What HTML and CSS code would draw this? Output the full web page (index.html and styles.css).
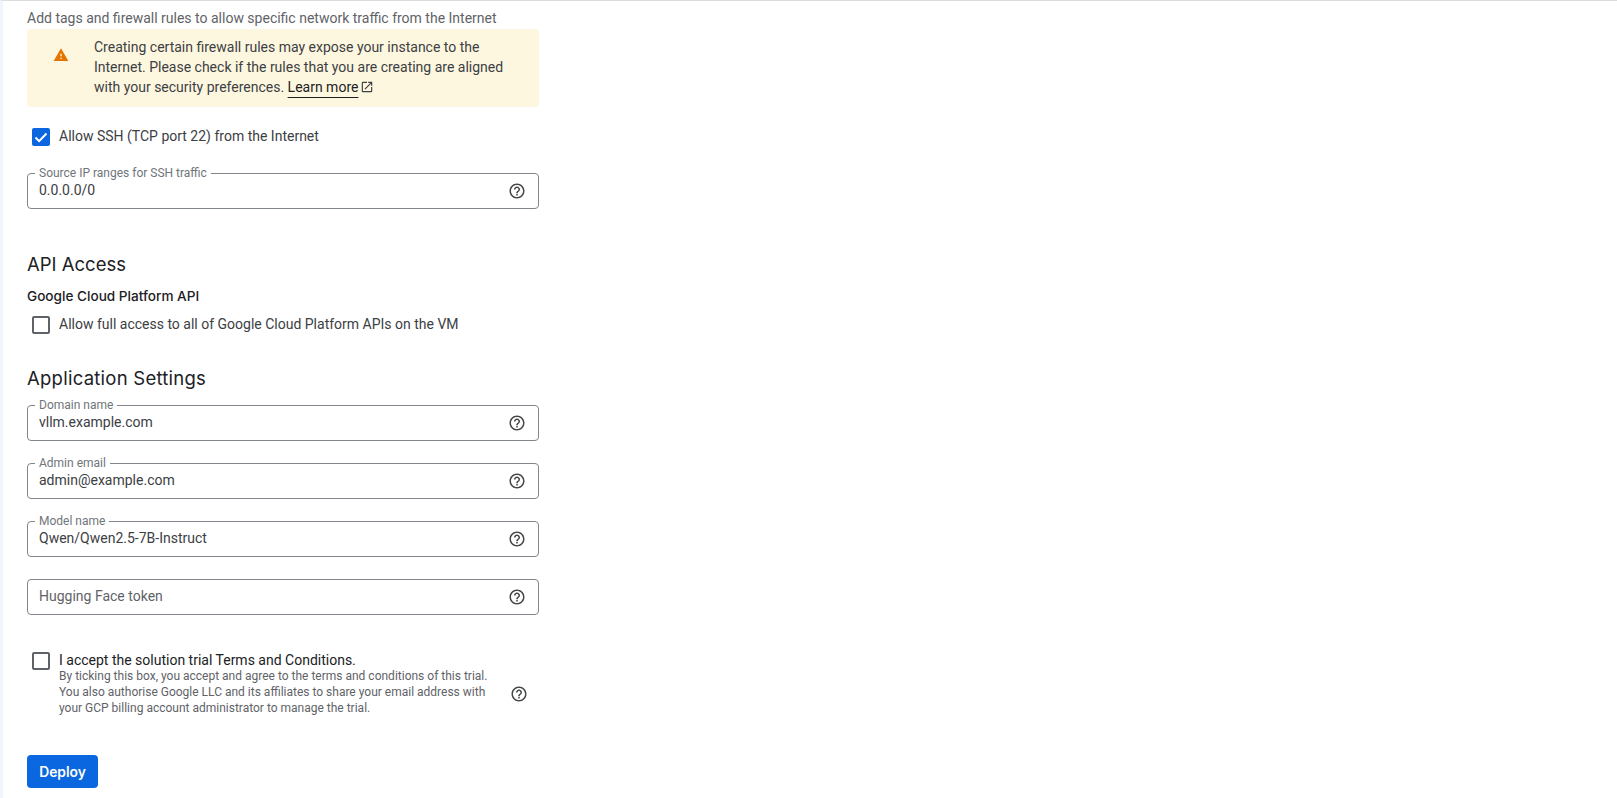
FILE: index.html
```html
<!DOCTYPE html>
<html lang="en">
<head>
<meta charset="utf-8">
<title>Deploy</title>
<link rel="stylesheet" href="styles.css">
</head>
<body>
<div class="page">
  <main class="form">
    <p class="hint">Add tags and firewall rules to allow specific network traffic from the Internet</p>
    <div class="warning">
      <svg class="warn-icon" viewBox="0 0 24 24"><path fill="#e37400" d="M1 21h22L12 2 1 21zm12-3h-2v-2h2v2zm0-4h-2v-4h2v4z"/></svg>
      <p>Creating certain firewall rules may expose your instance to the Internet. Please check if the rules that you are creating are aligned with your security preferences. <a class="learn" href="#">Learn more</a><svg class="ext" viewBox="0 0 24 24"><path fill="#3c4043" d="M19 19H5V5h7V3H5a2 2 0 0 0-2 2v14a2 2 0 0 0 2 2h14a2 2 0 0 0 2-2v-7h-2v7zM14 3v2h3.59l-9.83 9.83 1.41 1.41L19 6.41V10h2V3h-7z"/></svg></p>
    </div>
    <div class="check ssh">
      <span class="box on"><svg viewBox="0 0 18 18"><path fill="none" stroke="#fff" stroke-width="2" d="M3.5 9.5l3.6 3.6 7.4-7.6"/></svg></span>
      <span>Allow SSH (TCP port 22) from the Internet</span>
    </div>
    <div class="field first">
      <span class="legend">Source IP ranges for SSH traffic</span>
      <span class="value">0.0.0.0/0</span>
      <svg class="help" viewBox="0 0 24 24"><use href="#q"/></svg>
    </div>

    <h2 class="api">API Access</h2>
    <h3>Google Cloud Platform API</h3>
    <div class="check full">
      <span class="box"></span>
      <span>Allow full access to all of Google Cloud Platform APIs on the VM</span>
    </div>

    <h2 class="app">Application Settings</h2>
    <div class="fields">
      <div class="field">
        <span class="legend">Domain name</span>
        <span class="value">vllm.example.com</span>
        <svg class="help" viewBox="0 0 24 24"><use href="#q"/></svg>
      </div>
      <div class="field">
        <span class="legend">Admin email</span>
        <span class="value">admin@example.com</span>
        <svg class="help" viewBox="0 0 24 24"><use href="#q"/></svg>
      </div>
      <div class="field">
        <span class="legend">Model name</span>
        <span class="value">Qwen/Qwen2.5-7B-Instruct</span>
        <svg class="help" viewBox="0 0 24 24"><use href="#q"/></svg>
      </div>
      <div class="field plain">
        <span class="value placeholder">Hugging Face token</span>
        <svg class="help" viewBox="0 0 24 24"><use href="#q"/></svg>
      </div>
    </div>

    <div class="terms">
      <span class="box"></span>
      <div class="terms-text">
        <div class="terms-title">I accept the solution trial Terms and Conditions.</div>
        <div class="terms-sub">By ticking this box, you accept and agree to the terms and conditions of this trial. You also authorise Google LLC and its affiliates to share your email address with your GCP billing account administrator to manage the trial.</div>
      </div>
      <svg class="help" viewBox="0 0 24 24"><use href="#q"/></svg>
    </div>

    <button class="deploy" type="button">Deploy</button>
  </main>
</div>
<svg class="defs" width="0" height="0">
  <symbol id="q" viewBox="0 0 24 24"><path fill="#444746" d="M11 18h2v-2h-2v2zm1-16C6.48 2 2 6.48 2 12s4.48 10 10 10 10-4.48 10-10S17.52 2 12 2zm0 18c-4.41 0-8-3.59-8-8s3.59-8 8-8 8 3.59 8 8-3.59 8-8 8zm0-14c-2.21 0-4 1.79-4 4h2c0-1.1.9-2 2-2s2 .9 2 2c0 2-3 1.75-3 5h2c0-2.25 3-2.5 3-5 0-2.21-1.79-4-4-4z"/></symbol>
</svg>
</body>
</html>
```

FILE: styles.css
```css
* { box-sizing: border-box; }
html, body { margin: 0; height: 100%; }
body {
  background: #fff;
  font-family: Roboto, "Liberation Sans", sans-serif;
  font-size: 14px;
  color: #202124;
  overflow: hidden;
}
.page {
  height: 798px;
  border-top: 1px solid #dadce0;
  border-left: 3px solid #f1f5fe;
  padding-left: 24px;
}
.form { width: 512px; }
.hint { margin: 9px 0 0; line-height: 17px; color: #5f6368; font-size: 14px; }
.warning {
  display: flex;
  align-items: flex-start;
  margin-top: 2px;
  height: 78px;
  padding: 8px 20px 0 26px;
  background: #fef7e0;
  border-radius: 4px;
}
.warning p { margin: 0; font-size: 14px; line-height: 20px; color: #3c4043; }
.warn-icon { flex: none; width: 16px; height: 16px; margin: 10px 25px 0 0; }
.learn { color: #202124; text-decoration: underline; text-decoration-thickness: 1px; text-underline-offset: 5px; }
.ext { width: 14px; height: 14px; margin-left: 2px; vertical-align: -2px; }
.check { display: flex; align-items: flex-start; gap: 9px; padding-left: 5px; font-size: 14px; line-height: 20px; color: #3c4043; }
.check .box { margin-top: 2px; }
.ssh { margin-top: 19px; }
.box {
  flex: none;
  display: block;
  width: 18px;
  height: 18px;
  border: 2px solid #5f6368;
  border-radius: 2px;
}
.box.on { background: #0b67e0; border: 0; }
.box svg { display: block; width: 18px; height: 18px; }
.field {
  position: relative;
  display: flex;
  align-items: center;
  justify-content: space-between;
  height: 36px;
  padding: 0 12px 0 11px;
  border: 1px solid #80868b;
  border-radius: 4px;
  font-size: 14px;
  color: #3c4043;
}
.field .value { margin-bottom: 3px; }
.field.plain .value { margin-bottom: 2px; }
.field.first { margin-top: 27px; }
.legend {
  position: absolute;
  top: -7px;
  left: 7px;
  padding: 0 4px;
  background: #fff;
  font-size: 12px;
  line-height: 13px;
  color: #70757a;
}
.field .placeholder { color: #5f6368; }
.help { flex: none; width: 18px; height: 18px; }
h2 { margin: 0; font-family: Inter, sans-serif; font-weight: 400; font-size: 18.5px; line-height: 24px; color: #202124; }
h3 { margin: 10px 0 0; font-family: Inter, sans-serif; font-weight: 500; font-size: 13.6px; line-height: 20px; color: #202124; }
.api { margin-top: 43px; }
.full { margin-top: 8px; }
.app { margin-top: 32px; letter-spacing: .25px; }
.fields { display: flex; flex-direction: column; gap: 22px; margin-top: 15px; }
.terms { display: flex; align-items: flex-start; margin-top: 36px; padding-left: 5px; }
.terms .box { margin-top: 1px; }
.terms-text { width: 430px; margin: 1px 0 0 9px; }
.terms-title { font-size: 14px; line-height: 16px; color: #202124; }
.terms-sub { font-size: 12px; line-height: 16px; color: #5f6368; }
.terms .help { margin: 34px 0 0 21px; }
.deploy {
  display: block;
  margin-top: 39px;
  width: 71px;
  height: 33px;
  padding: 0;
  border: 0;
  border-radius: 4px;
  background: #0b67e0;
  color: #fff;
  font-family: Inter, sans-serif;
  font-weight: 600;
  font-size: 13.8px;
}
.defs { position: absolute; }
```
